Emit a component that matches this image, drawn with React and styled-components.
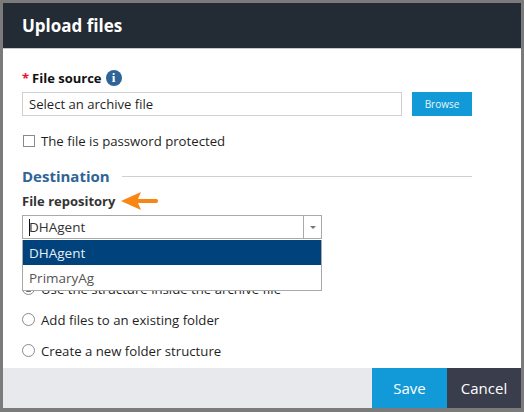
import React from 'react';
import styled, {createGlobalStyle} from 'styled-components';

const Global = createGlobalStyle`
    html, body {
        margin: 0;
        padding: 0;
        background: #7b7b7b;
    }
    body {
        font-family: "Open Sans", "Noto Sans", sans-serif;
        color: #1f1f1f;
    }
`;

const Dialog = styled.div`
    box-sizing: border-box;
    width: 518px;
    height: 405px;
    margin: 3px 3px 4px 3px;
    background: #fff;
    display: flex;
    flex-direction: column;
`;

const Header = styled.header`
    box-sizing: border-box;
    height: 46px;
    padding-left: 19px;
    background: #232b34;
    border-bottom: 1px solid #c8c8c8;
    display: flex;
    align-items: center;
    color: #fff;
    font-size: 17px;
    font-weight: 700;
`;

const Body = styled.div`
    flex: 1;
    padding: 20px 49px 0 19px;
    display: flex;
    flex-direction: column;
    position: relative;
`;

const LabelRow = styled.div`
    height: 18px;
    display: flex;
    align-items: center;
    gap: 4px;
    font-size: 13px;
    font-weight: 700;
    color: ${p => p.$muted ? '#333' : '#111'};
`;

const Star = styled.span`
    color: #e8112d;
    margin-right: 3px;
`;

const InfoBadge = styled.span`
    width: 16px;
    height: 16px;
    border-radius: 50%;
    background: #2f6496;
    color: #fff;
    font-family: "Liberation Serif", serif;
    font-size: 13px;
    font-weight: 700;
    display: flex;
    align-items: center;
    justify-content: center;
`;

const SourceRow = styled.div`
    margin-top: 5px;
    display: flex;
    gap: 10px;
`;

const TextField = styled.div`
    box-sizing: border-box;
    width: 380px;
    height: 24px;
    padding-left: 6px;
    border: 1px solid #d0d0d0;
    display: flex;
    align-items: center;
    font-size: 13.1px;
`;

const BrowseButton = styled.button`
    width: 60px;
    height: 24px;
    padding: 0;
    border: 0;
    background: #119ad7;
    color: #e8f6fc;
    font-family: inherit;
    font-size: 10px;
`;

const CheckRow = styled.label`
    margin-top: 16px;
    margin-left: 1px;
    height: 18px;
    display: flex;
    align-items: center;
    gap: 6px;
    font-size: 13.2px;
`;

const CheckBox = styled.span`
    box-sizing: border-box;
    width: 12px;
    height: 12px;
    border: 1px solid #8a8a8a;
    background: #fff;
`;

const SectionRow = styled.div`
    margin-top: 16px;
    height: 20px;
    display: flex;
    align-items: center;
    gap: 12px;
    color: #2f6496;
    font-size: 15px;
    font-weight: 700;
`;

const Rule = styled.span`
    flex: 1;
    height: 1px;
    background: #cfcfcf;
`;

const RepoRow = styled(LabelRow)`
    margin-top: 6px;
    gap: 6px;
`;

const Combo = styled.div`
    margin-top: 5px;
    box-sizing: border-box;
    width: 300px;
    height: 24px;
    border: 1px solid #a9a9a9;
    display: flex;
    font-size: 13.5px;
    color: #333;
`;

const ComboValue = styled.div`
    flex: 1;
    padding-left: 6px;
    display: flex;
    align-items: center;
    background: linear-gradient(#111, #111) 6px 3px / 1px 17px no-repeat;
`;

const Caret = styled.div`
    width: 17px;
    border-left: 1px solid #a9a9a9;
    display: flex;
    align-items: center;
    justify-content: center;
    &::after {
        content: "";
        border-left: 3px solid transparent;
        border-right: 3px solid transparent;
        border-top: 3px solid #777;
    }
`;

const Menu = styled.ul`
    position: absolute;
    top: 191px;
    left: 19px;
    z-index: 2;
    box-sizing: border-box;
    width: 300px;
    margin: 0;
    padding: 0;
    list-style: none;
    background: #fff;
    border: 1px solid #a9a9a9;
    border-top: 0;
    font-size: 13.5px;
`;

const MenuItem = styled.li`
    height: 25px;
    padding-left: 6px;
    display: flex;
    align-items: center;
    background: ${p => p.$active ? '#00427c' : '#fff'};
    color: ${p => p.$active ? '#e6eef5' : '#555'};
`;

const RadioGroup = styled.div`
    margin-top: 40px;
    display: flex;
    flex-direction: column;
    gap: 12px;
`;

const RadioRow = styled.label`
    height: 19px;
    display: flex;
    align-items: center;
    gap: 6px;
    font-size: 13.2px;
`;

const Radio = styled.span`
    box-sizing: border-box;
    width: 13px;
    height: 13px;
    border-radius: 50%;
    border: 1px solid #8a8a8a;
    background: ${p => p.$checked ? 'radial-gradient(circle, #666 0 3.5px, #fff 4px)' : '#fff'};
`;

const Footer = styled.footer`
    height: 40px;
    background: #e8e9ec;
    display: flex;
    justify-content: flex-end;
`;

const FooterButton = styled.button`
    width: ${p => p.$primary ? '75px' : '74px'};
    padding: 0;
    border: 0;
    background: ${p => p.$primary ? '#119ad7' : '#3a3d4b'};
    color: #fff;
    font-family: inherit;
    font-size: 15px;
`;

const Arrow = () => (
    <svg width="38" height="20" viewBox="0 0 38 20">
        <path d="M0 10 L20 1 L17 8 L36 8 Q38 10 36 12 L17 12 L20 19 Z" fill="#f98513" />
    </svg>
);

export default function App() {
    return (
        <>
            <Global />
            <Dialog>
                <Header>Upload files</Header>
                <Body>
                    <LabelRow>
                        <span><Star>*</Star>File source</span>
                        <InfoBadge>i</InfoBadge>
                    </LabelRow>
                    <SourceRow>
                        <TextField>Select an archive file</TextField>
                        <BrowseButton>Browse</BrowseButton>
                    </SourceRow>
                    <CheckRow><CheckBox />The file is password protected</CheckRow>
                    <SectionRow>Destination<Rule /></SectionRow>
                    <RepoRow $muted>File repository<Arrow /></RepoRow>
                    <Combo>
                        <ComboValue>DHAgent</ComboValue>
                        <Caret />
                    </Combo>
                    <Menu>
                        <MenuItem $active>DHAgent</MenuItem>
                        <MenuItem>PrimaryAg</MenuItem>
                    </Menu>
                    <RadioGroup>
                        <RadioRow><Radio $checked />Use the structure inside the archive file</RadioRow>
                        <RadioRow><Radio />Add files to an existing folder</RadioRow>
                        <RadioRow><Radio />Create a new folder structure</RadioRow>
                    </RadioGroup>
                </Body>
                <Footer>
                    <FooterButton $primary>Save</FooterButton>
                    <FooterButton>Cancel</FooterButton>
                </Footer>
            </Dialog>
        </>
    );
}
